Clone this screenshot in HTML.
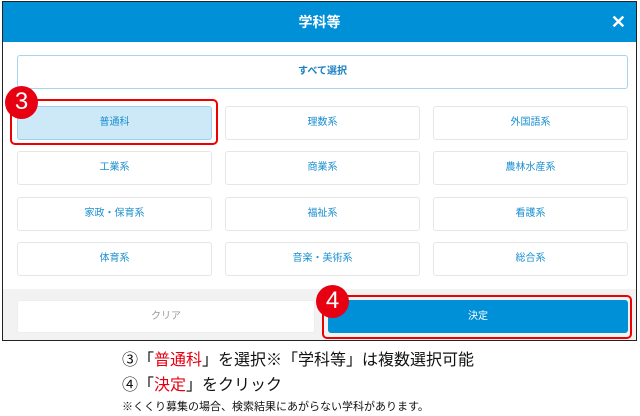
<!DOCTYPE html>
<html><head><meta charset="utf-8"><style>
body{margin:0;width:640px;height:416px;background:#fff;position:relative;overflow:hidden;font-family:"Liberation Sans","Noto Sans CJK JP",sans-serif}
.m{position:absolute;left:2px;top:1px;width:633px;height:338px;border:1px solid #222;background:#fff;overflow:hidden}
.h{position:absolute;left:0;top:0;right:0;height:40px;background:#0090d8;color:#fff;font-weight:bold;font-size:14px;text-align:center;line-height:40px}
.x{position:absolute;right:10px;top:0;font-size:18px}
.b{position:absolute;box-sizing:border-box;border:1px solid #e6e6e6;border-radius:3px;background:#fff;color:#1a8fd0;font-size:10px;text-align:center}
.f{position:absolute;left:0;right:0;top:287px;bottom:0;background:#f2f2f2}
.r{position:absolute;border:2px solid #e00;border-radius:5px}
.c{position:absolute;width:33px;height:33px;border-radius:50%;background:#e60012;color:#fff;font-size:24px;text-align:center;line-height:31px}
.t{position:absolute;left:122px;font-size:16px;color:#111;white-space:nowrap}
.red{color:#e60012}
</style></head><body>
<div class="m">
<div class="h">学科等<span class="x">✕</span></div>
<div class="b" style="left:14px;top:53px;width:611px;height:34px;line-height:32px;border-color:#a9d4ef;font-weight:bold;color:#1a7fc0">すべて選択</div>
<div class="b" style="left:14px;top:104px;width:195px;height:34px;line-height:32px;background:#cde9f8;border-color:#9fcfea">普通科</div>
<div class="b" style="left:222px;top:104px;width:195px;height:34px;line-height:32px">理数系</div>
<div class="b" style="left:430px;top:104px;width:195px;height:34px;line-height:32px">外国語系</div>
<div class="b" style="left:14px;top:149px;width:195px;height:34px;line-height:32px">工業系</div>
<div class="b" style="left:222px;top:149px;width:195px;height:34px;line-height:32px">商業系</div>
<div class="b" style="left:430px;top:149px;width:195px;height:34px;line-height:32px">農林水産系</div>
<div class="b" style="left:14px;top:195px;width:195px;height:34px;line-height:32px">家政・保育系</div>
<div class="b" style="left:222px;top:195px;width:195px;height:34px;line-height:32px">福祉系</div>
<div class="b" style="left:430px;top:195px;width:195px;height:34px;line-height:32px">看護系</div>
<div class="b" style="left:14px;top:240px;width:195px;height:34px;line-height:32px">体育系</div>
<div class="b" style="left:222px;top:240px;width:195px;height:34px;line-height:32px">音楽・美術系</div>
<div class="b" style="left:430px;top:240px;width:195px;height:34px;line-height:32px">総合系</div>
<div class="f"></div>
<div class="b" style="left:14px;top:298px;width:298px;height:33px;line-height:31px;color:#999;border-color:#eee">クリア</div>
<div class="b" style="left:325px;top:298px;width:300px;height:33px;line-height:31px;background:#0090d8;border-color:#0090d8;color:#fff">決定</div>
</div>
<div class="r" style="left:10px;top:99px;width:204px;height:42px"></div>
<div class="c" style="left:5px;top:86px">3</div>
<div class="r" style="left:322px;top:295px;width:306px;height:40px"></div>
<div class="c" style="left:316px;top:285px">4</div>
<div class="t" style="top:346px">③「<span class="red">普通科</span>」を選択※「学科等」は複数選択可能</div>
<div class="t" style="top:371px">④「<span class="red">決定</span>」をクリック</div>
<div class="t" style="top:398px;font-size:11px">※くくり募集の場合、検索結果にあがらない学科があります。</div>
</body></html>
